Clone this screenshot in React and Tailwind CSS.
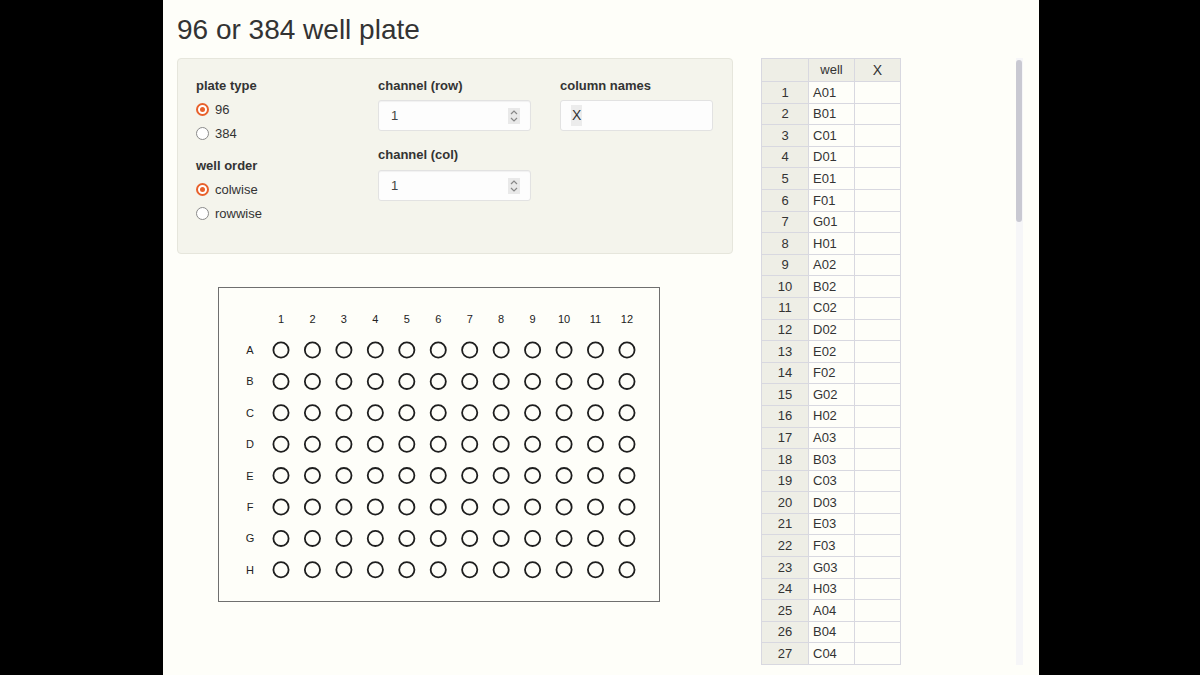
import React from 'react'

const rowsAH = ['A', 'B', 'C', 'D', 'E', 'F', 'G', 'H']
const cols = Array.from({ length: 12 }, (_, i) => i + 1)

const wells = []
for (let c = 1; c <= 4; c++) {
  for (const r of rowsAH) {
    wells.push(`${r}${String(c).padStart(2, '0')}`)
  }
}
const tableRows = wells.slice(0, 27)

const Radio = ({ checked, label }) => (
  <div className="flex items-center h-[23.5px] gap-[6px]">
    {checked ? (
      <span className="w-[13px] h-[13px] rounded-full border-[2px] border-[#e8612c] bg-white flex items-center justify-center">
        <span className="w-[5px] h-[5px] rounded-full bg-[#e8612c]" />
      </span>
    ) : (
      <span className="w-[13px] h-[13px] rounded-full border border-[#8a8a8a] bg-white" />
    )}
    <span className="text-[13px] text-[#333]">{label}</span>
  </div>
)

const NumberInput = ({ value }) => (
  <div className="w-[153px] h-[31px] bg-[#fdfdfd] border border-[#e2e2e2] rounded-[3px] shadow-[inset_0_1px_1px_rgba(0,0,0,0.05)] flex items-center pl-[12px] pr-[10px]">
    <span className="text-[13px] text-[#444] flex-1">{value}</span>
    <svg width="12" height="16" viewBox="0 0 12 16" className="bg-[#e9e9e9]">
      <path d="M3 6 L6 3 L9 6" fill="none" stroke="#888" strokeWidth="1.2" />
      <path d="M3 10 L6 13 L9 10" fill="none" stroke="#888" strokeWidth="1.2" />
    </svg>
  </div>
)

const Label = ({ children }) => (
  <div className="text-[13px] font-bold text-[#333] leading-[15px]">{children}</div>
)

const Plate = () => {
  const colX = (i) => 63 + i * 31.45
  const rowY = (j) => 63 + j * 31.4
  return (
    <svg width="443" height="316" viewBox="0 0 443 316">
      <rect x="0.5" y="0.5" width="441" height="314" fill="none" stroke="#6f6f6f" strokeWidth="1" />
      {cols.map((c, i) => (
        <text key={c} x={colX(i)} y="36" textAnchor="middle" fontSize="11" fill="#222" fontFamily="Liberation Sans, Arial, sans-serif">
          {c}
        </text>
      ))}
      {rowsAH.map((r, j) => (
        <g key={r}>
          <text x="32" y={rowY(j) + 4} textAnchor="middle" fontSize="11" fill="#222" fontFamily="Liberation Sans, Arial, sans-serif">
            {r}
          </text>
          {cols.map((c, i) => (
            <circle key={c} cx={colX(i)} cy={rowY(j)} r="7.6" fill="none" stroke="#1e1e1e" strokeWidth="1.8" />
          ))}
        </g>
      ))}
    </svg>
  )
}

export default function App() {
  return (
    <div className="w-[1200px] h-[675px] bg-black overflow-hidden" style={{ fontFamily: '"Liberation Sans", Arial, sans-serif' }}>
      <div className="ml-[163px] w-[876px] h-[675px] bg-[#fefef9] pl-[14px]">
        <div className="pt-[13px] h-[58px] text-[28px] leading-[34px] text-[#333]">96 or 384 well plate</div>
        <div className="flex">
          <div className="w-[556px] shrink-0">
            <div className="h-[196px] bg-[#f4f4ec] border border-[#e6e6dc] rounded-[4px] pl-[18px] pt-[19px] flex">
              <div className="w-[182px] shrink-0">
                <Label>plate type</Label>
                <div className="mt-[5px]">
                  <Radio checked label="96" />
                  <Radio label="384" />
                </div>
                <div className="mt-[13px]">
                  <Label>well order</Label>
                </div>
                <div className="mt-[5px]">
                  <Radio checked label="colwise" />
                  <Radio label="rowwise" />
                </div>
              </div>
              <div className="w-[182px] shrink-0">
                <Label>channel (row)</Label>
                <div className="mt-[7px]">
                  <NumberInput value="1" />
                </div>
                <div className="mt-[16px]">
                  <Label>channel (col)</Label>
                </div>
                <div className="mt-[8px]">
                  <NumberInput value="1" />
                </div>
              </div>
              <div className="shrink-0">
                <Label>column names</Label>
                <div className="mt-[7px] w-[153px] h-[31px] bg-[#fdfdfd] border border-[#e2e2e2] rounded-[3px] flex items-center pl-[10px]">
                  <span className="text-[14px] text-[#333] bg-[#ececec] px-[1px]">X</span>
                </div>
              </div>
            </div>
            <div className="pl-[41px] pt-[33px]">
              <Plate />
            </div>
          </div>
          <div className="ml-[28px] flex">
            <div className="w-[140px] border-l border-t border-[#d8d8e0]">
              <div className="grid grid-cols-[47px_46px_46px] text-[13px] text-[#333]">
                <div className="h-[23px] bg-[#eeeee6] border-r border-b border-[#d8d8e0]" />
                <div className="h-[23px] bg-[#eeeee6] border-r border-b border-[#d8d8e0] flex items-center justify-center">well</div>
                <div className="h-[23px] bg-[#eeeee6] border-r border-b border-[#d8d8e0] flex items-center justify-center text-[14px]">X</div>
                {tableRows.map((w, i) => (
                  <React.Fragment key={w}>
                    <div className="h-[21.6px] bg-[#eeeee6] border-r border-b border-[#d8d8e0] flex items-center justify-center">{i + 1}</div>
                    <div className="h-[21.6px] border-r border-b border-[#d8d8e0] flex items-center pl-[4px]">{w}</div>
                    <div className="h-[21.6px] border-r border-b border-[#d8d8e0]" />
                  </React.Fragment>
                ))}
              </div>
            </div>
            <div className="ml-[115px] w-[7px] h-[607px] bg-[#f6f6f8] pt-[2px]">
              <div className="w-[6px] h-[162px] bg-[#c9c9d2] rounded-[3px]" />
            </div>
          </div>
        </div>
      </div>
    </div>
  )
}
